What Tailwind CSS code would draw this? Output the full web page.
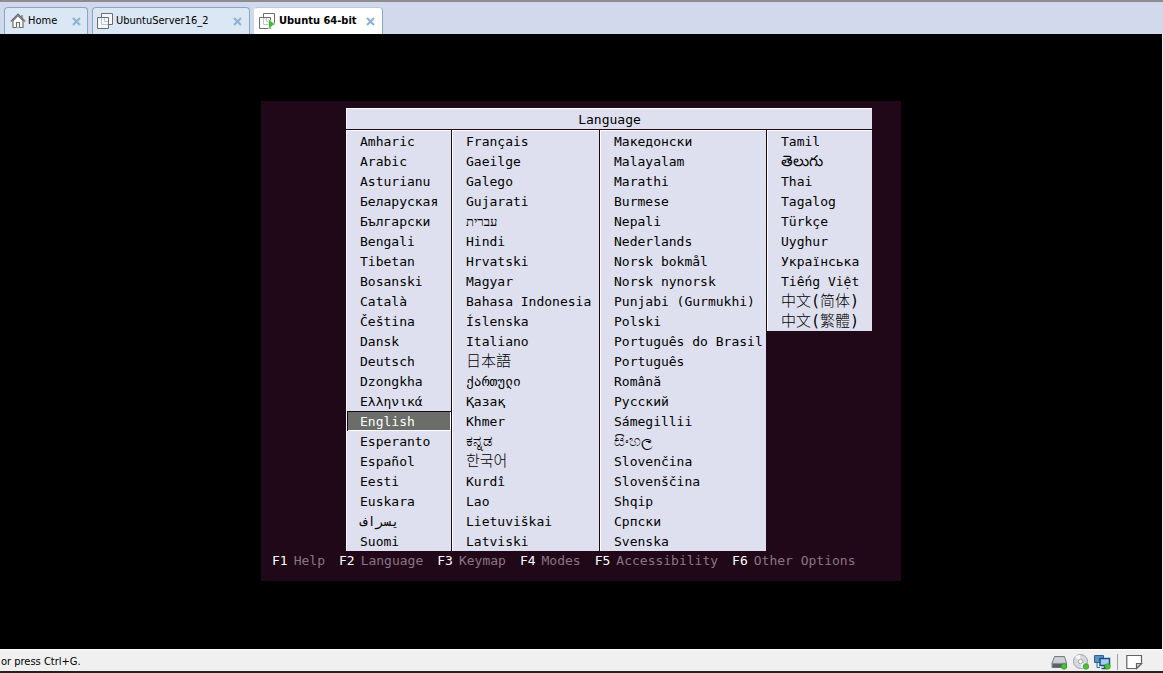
<!DOCTYPE html>
<html lang="en">
<head>
<meta charset="utf-8">
<title>Ubuntu 64-bit</title>
<script src="https://cdn.jsdelivr.net/npm/@tailwindcss/browser@4"></script>
</head>
<body class="flex min-h-screen flex-col bg-[#f0f0f0] font-['DejaVu_Sans_Condensed','Noto_Sans',sans-serif] text-[11px] text-black">
<nav class="flex h-[34px] shrink-0 items-end gap-1 border-t-2 border-[#8d8d90] bg-[#d3d9ec] pl-1" aria-label="Virtual machines">
  <div class="flex h-[27px] w-[84px] items-center rounded-t-sm border border-b-0 border-[#86a9c3] bg-[#dbe7f5] pl-[5px] pr-[3px]">
    <button class="flex flex-1 items-center gap-[2px]">
      <svg width="16" height="16" viewBox="0 0 16 16" fill="#fff" stroke="#6e6e6e" stroke-width="1.2"><path d="M3 7.5V14.5H13V7.5L8 2.5Z"/><path d="M6.5 14.5V9.5H9.5V14.500M12 5V2"/><path fill="none" d="M.8 8.500L8 1.200L15.200 8.500"/></svg>
      <span class="pt-px">Home</span></button>
    <button aria-label="Close Home" class="grid size-4 place-items-center"><svg width="9" height="9" viewBox="0 0 9 9" stroke="#8fb3d2" stroke-width="2.2"><path d="M1 1L8 8M8 1L1 8"/></svg></button>
  </div>
  <div class="flex h-[27px] w-[158px] items-center rounded-t-sm border border-b-0 border-[#86a9c3] bg-[#dbe7f5] pl-1 pr-1">
    <button class="flex flex-1 items-center gap-[3px]">
      <svg width="16" height="16" viewBox="0 0 16 16" fill="#f4f8fc" stroke="#6e6e6e"><path d="M4.500 .5H15.500V11.500H4.500Z"/><path d="M.5 4.500H11.500V15.500H.5Z"/><path fill="none" stroke="#b7c9dc" d="M4.500 5V11.500H11M7.500 5V8.500H11"/></svg>
      <span class="pt-px">UbuntuServer16_2</span></button>
    <button aria-label="Close UbuntuServer16_2" class="grid size-4 place-items-center"><svg width="9" height="9" viewBox="0 0 9 9" stroke="#8fb3d2" stroke-width="2.2"><path d="M1 1L8 8M8 1L1 8"/></svg></button>
  </div>
  <div class="flex h-[27px] w-[129px] items-center rounded-t-sm border border-b-0 border-l-white border-t-[#b7cbe0] border-r-[#86a9c3] bg-white pl-1 pr-1">
    <button class="flex flex-1 items-center gap-1 font-bold" aria-current="page">
      <svg width="16" height="16" viewBox="0 0 16 16" fill="#fff" stroke="#6e6e6e"><path d="M4.500 .5H15.500V11.500H4.500Z"/><path d="M.5 4.500H11.500V15.500H.5Z"/><path fill="none" stroke="#b7c9dc" d="M4.500 5V11.500H11M7.500 5V8.500H11"/><path fill="#45b83b" stroke="#fff" stroke-width=".6" d="M9.500 6L15.800 11L9.500 16Z"/></svg>
      <span class="pt-px">Ubuntu 64-bit</span></button>
    <button aria-label="Close Ubuntu 64-bit" class="grid size-4 place-items-center"><svg width="9" height="9" viewBox="0 0 9 9" stroke="#8fb3d2" stroke-width="2.2"><path d="M1 1L8 8M8 1L1 8"/></svg></button>
  </div>
</nav>

<main class="mr-px flex flex-1 items-center justify-center bg-black pb-px font-['DejaVu_Sans_Mono','Noto_Sans_CJK_SC','Noto_Sans',monospace] text-[13px] leading-5">
  <section class="flex h-[480px] w-[640px] flex-col bg-[#200818] pt-[7px]">
    <div class="ml-[85px] w-[526px]">
      <h1 class="h-[21px] border-l border-t border-white bg-[#dfe0ef] pt-px text-center">Language</h1>
      <div id="languages" class="flex items-start gap-px pt-px"></div>
    </div>
    <div class="flex gap-[14px] pl-[11px] text-[#8c7486]">
      <button class="flex gap-[6px]"><span class="text-white">F1</span>Help</button>
      <button class="flex gap-[6px]"><span class="text-white">F2</span>Language</button>
      <button class="flex gap-[6px]"><span class="text-white">F3</span>Keymap</button>
      <button class="flex gap-[6px]"><span class="text-white">F4</span>Modes</button>
      <button class="flex gap-[6px]"><span class="text-white">F5</span>Accessibility</button>
      <button class="flex gap-[6px]"><span class="text-white">F6</span>Other Options</button>
    </div>
  </section>
</main>

<footer class="flex h-6 shrink-0 items-center justify-between border-b-2 border-t border-b-[#222] border-t-white pl-px pr-5 pt-[2px]">
  <p class="pt-px">or press Ctrl+G.</p>
  <div class="flex items-center gap-[5px]">
    <button aria-label="Hard disk"><svg width="17" height="16" viewBox="0 0 17 16"><path d="M3.500 2.500H13.500L15.500 9V13.500H1V9Z" fill="#b9bfc6" stroke="#777e86"/><path d="M1.500 9.500H15V13.500H1.500Z" fill="#596069"/><path d="M4 3.500H13L14.500 8.500H2Z" fill="#cdd2d7"/><circle cx="13" cy="12.500" r="2.800" fill="#4fc02f" stroke="#2e8d20" stroke-width=".6"/></svg></button>
    <button aria-label="CD/DVD"><svg width="16" height="16" viewBox="0 0 16 16"><circle cx="7.500" cy="7.500" r="7" fill="#d5d9dd" stroke="#9da3a9"/><path d="M7.500 7.500L2 3A7 7 0 0 1 7 1ZM7.500 7.500L13 12A7 7 0 0 1 8 14Z" fill="#f8fafc"/><circle cx="7.500" cy="7.500" r="2.200" fill="#fff" stroke="#9da3a9"/><circle cx="13" cy="12.500" r="2.800" fill="#4fc02f" stroke="#2e8d20" stroke-width=".6"/></svg></button>
    <button aria-label="Network adapter"><svg width="17" height="16" viewBox="0 0 17 16"><path d="M.5 1.500H9.500V8.500H.5Z" fill="#5b91bf" stroke="#2b6294"/><path d="M3 9V13.500H6" fill="none" stroke="#2b6294"/><path d="M6 4.500H15.500V11.500H6Z" fill="#a9cdf0" stroke="#174f87" stroke-width="1.500"/><path d="M7.500 14.500H13M10.500 12V14" stroke="#174f87" stroke-width="1.400"/><circle cx="13.500" cy="12.500" r="2.800" fill="#4fc02f" stroke="#2e8d20" stroke-width=".6"/></svg></button>
    <span class="ml-px h-4 w-px bg-[#a0a0a0]"></span>
    <button aria-label="Messages" class="ml-[3px]"><svg width="17" height="16" viewBox="0 0 17 16" fill="#fff" stroke="#626262" stroke-width="1.200"><path d="M.8 1.500H15.500V9.500L10.500 14.500H.8Z"/><path d="M10.500 14.500V9.500H15.500Z" fill="#d8d8d8"/></svg></button>
  </div>
</footer>

<script>
const columns = [
  ["w-[105px]", "Amharic|Arabic|Asturianu|Беларуская|Български|Bengali|Tibetan|Bosanski|Català|Čeština|Dansk|Deutsch|Dzongkha|Ελληνικά|English|Esperanto|Español|Eesti|Euskara|فارسی|Suomi"],
  ["w-[147px]", "Français|Gaeilge|Galego|Gujarati|עברית|Hindi|Hrvatski|Magyar|Bahasa Indonesia|Íslenska|Italiano|日本語|ქართული|Қазақ|Khmer|ಕನ್ನಡ|한국어|Kurdî|Lao|Lietuviškai|Latviski"],
  ["w-[166px]", "Македонски|Malayalam|Marathi|Burmese|Nepali|Nederlands|Norsk bokmål|Norsk nynorsk|Punjabi (Gurmukhi)|Polski|Português do Brasil|Português|Română|Русский|Sámegillii|සිංහල|Slovenčina|Slovenščina|Shqip|Српски|Svenska"],
  ["w-[105px]", "Tamil|తెలుగు|Thai|Tagalog|Türkçe|Uyghur|Українська|Tiếng Việt|中文(简体)|中文(繁體)"]
];
const large = ["日本語", "한국어", "中文(简体)", "中文(繁體)", "ಕನ್ನಡ", "සිංහල", "తెలుగు"];
for (const [width, names] of columns) {
  const list = document.createElement("ul");
  list.className = width + " border-l border-t border-white bg-[#dfe0ef]";
  for (const name of names.split("|")) {
    const item = document.createElement("li");
    const button = document.createElement("button");
    let look = "block h-5 w-full whitespace-nowrap pl-[13px] text-left";
    if (name === "English") look += " bg-[#6b6d69] text-white shadow-[inset_1px_1px_#200818,inset_-1px_-1px_white]";
    if (large.includes(name)) look += " text-[15px] font-light";
    else look += " pt-px";
    button.className = look;
    if (name === "فارسی") {
      const override = document.createElement("bdo");
      override.dir = "ltr";
      override.textContent = name;
      button.append(override);
    } else {
      button.textContent = name;
    }
    item.append(button);
    list.append(item);
  }
  document.getElementById("languages").append(list);
}
</script>
</body>
</html>
